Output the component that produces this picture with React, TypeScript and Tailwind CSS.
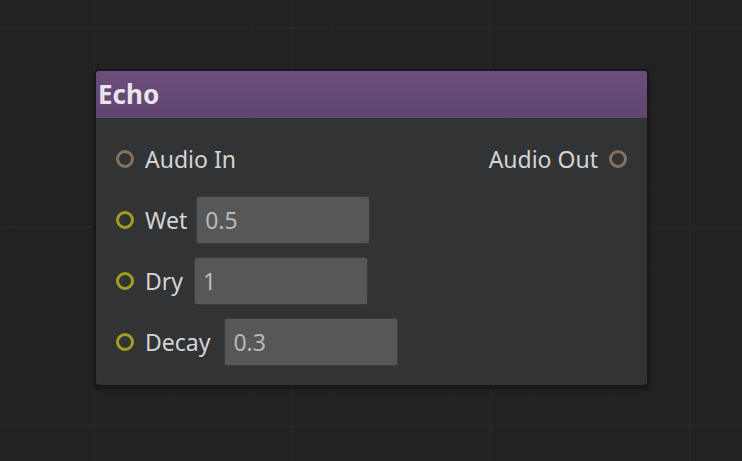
const font = { fontFamily: '"Noto Sans", "Open Sans", sans-serif' };

type Port = "audio" | "control";

function Socket({ kind }: { kind: Port }) {
	return (
		<span
			className={
				kind === "audio"
					? "block h-[18px] w-[18px] shrink-0 rounded-full border-[3px] border-[#85715f]"
					: "block h-[18px] w-[18px] shrink-0 rounded-full border-[3px] border-[#a39c24]"
			}
		/>
	);
}

function ParamRow({ label, value, gap }: { label: string; value: string; gap: string }) {
	return (
		<div className="flex h-12 items-center">
			<Socket kind="control" />
			<span className="ml-[11px] text-[23px] text-[#d4d4d4]">{label}</span>
			<div className={`${gap} flex h-12 w-[174px] items-center rounded-[3px] border border-[#3b3b3b] bg-[#575757] pl-[8px] text-[23px] text-[#b9b9b9]`}>
				{value}
			</div>
		</div>
	);
}

export default function App() {
	const params = [
		{ label: "Wet", value: "0.5", gap: "ml-[9px]" },
		{ label: "Dry", value: "1", gap: "ml-[11px]" },
		{ label: "Decay", value: "0.3", gap: "ml-[14px]" },
	];

	return (
		<div
			className="relative h-[461px] w-[742px] overflow-hidden bg-[#222222] bg-[linear-gradient(to_right,#2d2d2d_1px,transparent_1px),linear-gradient(to_bottom,#2d2d2d_1px,transparent_1px)] bg-[size:198.7px_198.7px] bg-[position:93px_28px]"
			style={font}
		>
			{/* faint minor grid */}
			<div className="absolute inset-0 bg-[linear-gradient(to_right,#262626_1px,transparent_1px),linear-gradient(to_bottom,#262626_1px,transparent_1px)] bg-[size:39.74px_39.74px] bg-[position:93px_28px] opacity-60" />

			<div className="absolute left-[94px] top-[69px] w-[555px] overflow-hidden rounded-[5px] border-2 border-[#181818] bg-[#323335] shadow-[0_2px_4px_rgba(0,0,0,0.4)]">
				<div className="flex h-[47px] items-center bg-gradient-to-b from-[#6b4e7c] to-[#5f4570] pl-[2px] text-[26px] font-bold text-[#ebe4ee]">
					Echo
				</div>
				<div className="flex flex-col gap-[13px] pb-[19px] pl-[20px] pr-[20px] pt-[17px]">
					<div className="flex h-12 items-center justify-between">
						<div className="flex items-center">
							<Socket kind="audio" />
							<span className="ml-[11px] text-[23px] text-[#d4d4d4]">Audio In</span>
						</div>
						<div className="flex items-center">
							<span className="mr-[11px] text-[23px] text-[#d4d4d4]">Audio Out</span>
							<Socket kind="audio" />
						</div>
					</div>
					{params.map((p) => (
						<ParamRow key={p.label} label={p.label} value={p.value} gap={p.gap} />
					))}
				</div>
			</div>
		</div>
	);
}
